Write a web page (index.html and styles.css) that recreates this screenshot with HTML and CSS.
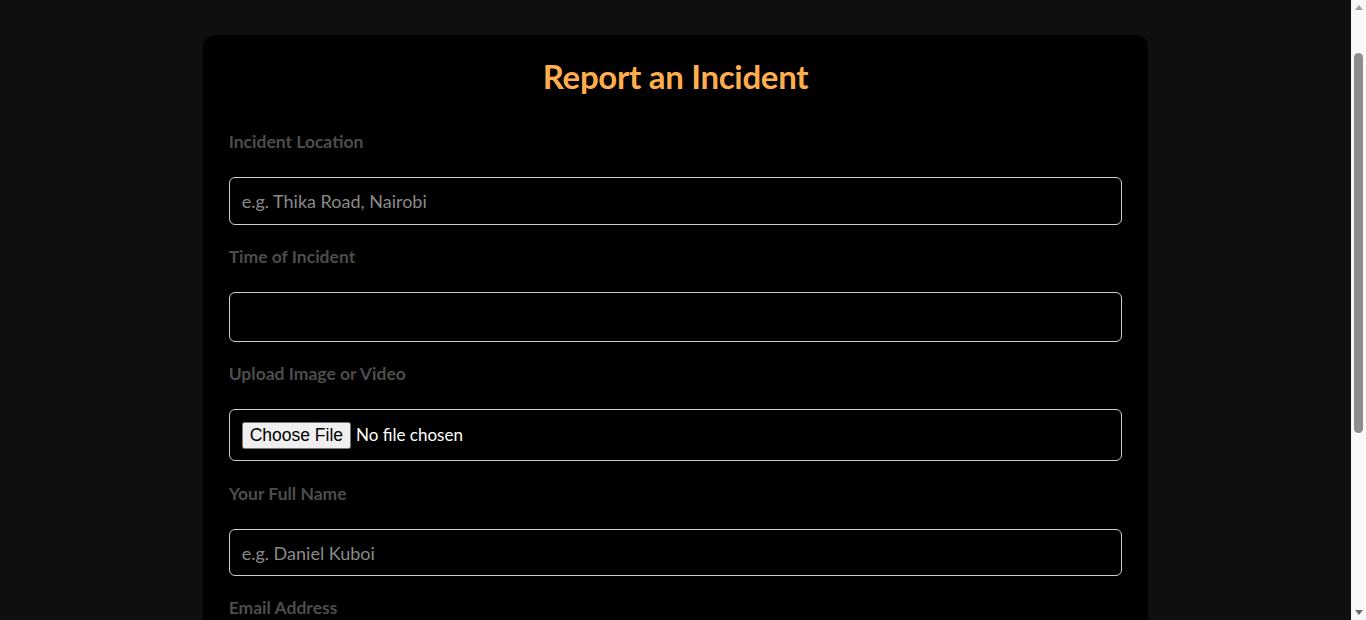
FILE: index.html
```html
<!DOCTYPE html>
<html lang="en">
<head>
<meta charset="utf-8">
<title>Report an Incident</title>
<link rel="stylesheet" href="styles.css">
</head>
<body>
<main class="card">
  <h2 class="title">Report an Incident</h2>
  <form class="form">
    <label class="label" for="loc">Incident Location</label>
    <input class="field" id="loc" type="text" placeholder="e.g. Thika Road, Nairobi">

    <label class="label" for="time">Time of Incident</label>
    <input class="field field-time" id="time" type="text">

    <label class="label" for="file">Upload Image or Video</label>
    <input class="field field-file" id="file" type="file">

    <label class="label" for="name">Your Full Name</label>
    <input class="field field-name" id="name" type="text" placeholder="e.g. Daniel Kuboi">

    <label class="label" for="email">Email Address</label>
    <input class="field" id="email" type="email" placeholder="e.g. daniel@example.com">

    <label class="label" for="desc">Description</label>
    <textarea class="field field-area" id="desc" placeholder="Describe what happened"></textarea>

    <button class="submit" type="button">Submit Report</button>
  </form>
</main>
<div class="scrollbar" aria-hidden="true">
  <span class="sb-arrow sb-up"></span>
  <span class="sb-thumb"></span>
  <span class="sb-arrow sb-down"></span>
</div>
</body>
</html>
```

FILE: styles.css
```css
html, body {
  margin: 0;
  padding: 0;
  background: #0f0f0f;
  font-family: "Lato", "Noto Sans", sans-serif;
}

body {
  margin-right: 15px;
}

.card {
  width: 70%;
  margin: 35px auto 40px;
  background: #000;
  border-radius: 12px;
  padding: 20px 26px 30px;
  box-sizing: border-box;
}

.title {
  margin: 0 0 35px;
  text-align: center;
  color: #ffad4d;
  font-size: 33px;
  font-weight: 700;
  line-height: 42px;
  letter-spacing: -0.3px;
}

.form {
  display: flex;
  flex-direction: column;
}

.label {
  display: block;
  color: #4d4d4d;
  font-size: 17.5px;
  font-weight: 700;
  line-height: 20px;
  margin-bottom: 25px;
}

.field {
  display: block;
  box-sizing: border-box;
  width: 100%;
  height: 48px;
  margin: 0 0 22px;
  padding: 0 12px;
  background: #000;
  color: #fff;
  border: 1px solid #cfcfcf;
  border-radius: 6px;
  font-family: "Lato", "Noto Sans", sans-serif;
  font-size: 18px;
}

.field::placeholder {
  color: #8a8a8a;
}

.field-time {
  height: 50px;
}

.field-file {
  height: 52px;
  padding: 12px 12px 0;
  margin-bottom: 23px;
  font-size: 17px;
  color: #fff;
}

.field-file::file-selector-button {
  font-family: "Liberation Sans", Arial, sans-serif;
  font-size: 17.5px;
  margin-right: 5px;
}

.field-name {
  height: 47px;
}

.field-area {
  height: 110px;
  padding: 12px;
  resize: vertical;
}

.submit {
  height: 48px;
  border: 0;
  border-radius: 6px;
  background: #ffad4d;
  color: #000;
  font-family: "Lato", "Noto Sans", sans-serif;
  font-size: 17px;
  font-weight: 700;
}

/* browser scrollbar, drawn over the right edge */
.scrollbar {
  position: fixed;
  top: 0;
  right: 0;
  bottom: 0;
  width: 15px;
  background: #f8f8f8;
  display: flex;
  flex-direction: column;
  align-items: center;
}

.sb-arrow {
  width: 0;
  height: 0;
  border-left: 4px solid transparent;
  border-right: 4px solid transparent;
  margin: 5px 0;
}

.sb-up {
  border-bottom: 5px solid #a3a3a3;
}

.sb-down {
  border-top: 5px solid #6b6b6b;
  margin-top: auto;
}

.sb-thumb {
  width: 9px;
  height: 380px;
  margin-top: 38px;
  background: #8d8d8d;
  border-radius: 5px;
}
```
